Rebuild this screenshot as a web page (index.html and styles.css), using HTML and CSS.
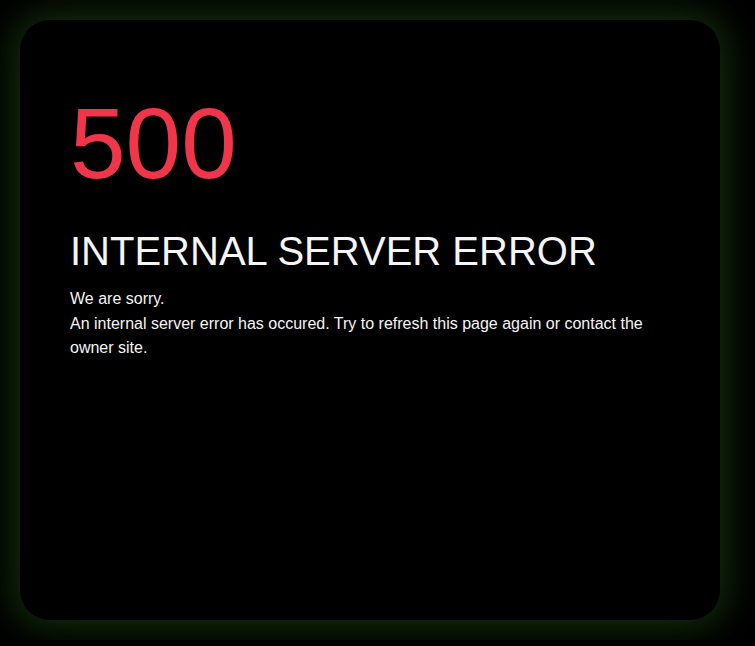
FILE: index.html
```html
<!DOCTYPE html>
<html>
<head>
<meta charset="utf-8">
<link rel="stylesheet" href="styles.css">
</head>
<body>
<div class="card">
  <h1 class="code">500</h1>
  <h2 class="title">INTERNAL SERVER ERROR</h2>
  <p class="msg">We are sorry.<br>An internal server error has occured. Try to refresh this page again or contact the owner site.</p>
</div>
</body>
</html>
```
FILE: styles.css
```css
html, body {
  margin: 0;
  padding: 0;
  background: #000;
}
body {
  padding: 20px;
  font-family: "Liberation Sans", Arial, sans-serif;
}
.card {
  width: 700px;
  height: 600px;
  box-sizing: border-box;
  background: #000;
  border-radius: 30px;
  box-shadow: 0 0 35px 8px rgba(30, 75, 20, 0.6);
  padding: 73px 50px 0 50px;
}
.code {
  margin: 0;
  font-size: 100px;
  font-weight: normal;
  line-height: 1;
  color: #f0364b;
}
.title {
  margin: 35px 0 0 0;
  font-size: 40px;
  font-weight: normal;
  line-height: 1.15;
  color: #f5f5f5;
}
.msg {
  margin: 13px 0 0 0;
  font-size: 16px;
  line-height: 24.5px;
  color: #f5f5f5;
  max-width: 590px;
}
```
